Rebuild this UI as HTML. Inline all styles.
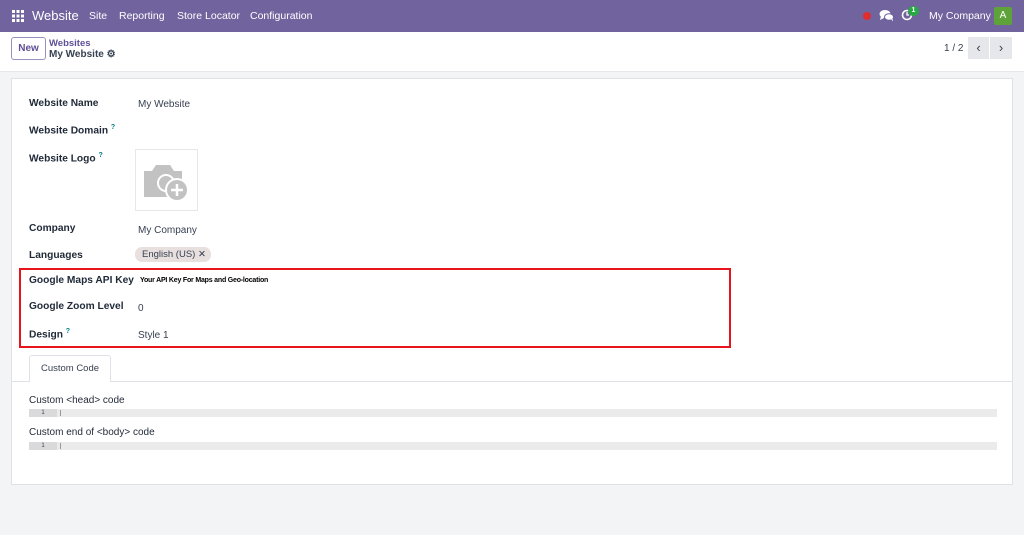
<!DOCTYPE html>
<html><head><style>
*{box-sizing:border-box;margin:0;padding:0}
body{width:1024px;height:535px;background:#f3f4f6;font-family:"Liberation Sans",sans-serif;font-size:10px;color:#374151;position:relative;overflow:hidden}
.nav{position:absolute;left:0;top:0;width:1024px;height:32px;background:#71639e;color:#fff}
.nav span{position:absolute;top:10px;font-size:10.5px}
.cp{position:absolute;left:0;top:32px;width:1024px;height:40px;background:#fff;border-bottom:1px solid #e5e7eb}
.sheet{position:absolute;left:11px;top:78px;width:1002px;height:407px;background:#fff;border:1px solid #dee2e6}
.a{position:absolute}
.lbl{position:absolute;left:17px;font-weight:bold;color:#1f2937;font-size:10.2px}
.val{position:absolute;left:126px;font-size:10px;color:#374151}
sup{color:#017e84;font-size:7px}
.code{position:absolute;left:17px;width:968px;height:8px;background:#ebebeb}
.code b{position:absolute;left:0;top:0;width:28px;height:8px;background:#dadada;font-size:6px;text-align:center;line-height:8px;font-weight:normal}
.code i{position:absolute;left:31px;top:1px;width:1px;height:6px;background:#999}
</style></head><body>
<div class="nav">
<svg class="a" style="left:12px;top:10px" width="12" height="12"><g fill="#fff"><rect x="0" y="0" width="3" height="3"/><rect x="4.5" y="0" width="3" height="3"/><rect x="9" y="0" width="3" height="3"/><rect x="0" y="4.5" width="3" height="3"/><rect x="4.5" y="4.5" width="3" height="3"/><rect x="9" y="4.5" width="3" height="3"/><rect x="0" y="9" width="3" height="3"/><rect x="4.5" y="9" width="3" height="3"/><rect x="9" y="9" width="3" height="3"/></g></svg>
<span style="left:32px;top:8px;font-size:13px">Website</span>
<span style="left:89px">Site</span>
<span style="left:119px">Reporting</span>
<span style="left:177px">Store Locator</span>
<span style="left:250px">Configuration</span>
<div class="a" style="left:863px;top:12px;width:8px;height:8px;border-radius:50%;background:#e02d2d"></div>
<svg class="a" style="left:879px;top:9px" width="15" height="13"><ellipse cx="6" cy="5" rx="5.5" ry="4" fill="#fff"/><path d="M2 7l-1 4 4-2z" fill="#fff"/><ellipse cx="10" cy="8" rx="4.5" ry="3.3" fill="#fff" stroke="#71639e" stroke-width="1"/><path d="M12 10l2 2.5-0.5-3z" fill="#fff"/></svg>
<svg class="a" style="left:901px;top:9px" width="12" height="12"><circle cx="6" cy="6" r="4.5" fill="none" stroke="#fff" stroke-width="1.6"/><path d="M6 3v3h2" stroke="#fff" fill="none" stroke-width="1.3"/></svg>
<div class="a" style="left:908px;top:6px;width:11px;height:10px;border-radius:5px;background:#28a745;font-size:7px;text-align:center;line-height:10px;font-weight:bold">1</div>
<span style="left:929px">My Company</span>
<div class="a" style="left:994px;top:7px;width:18px;height:18px;background:#5ea23a;border-radius:2px;text-align:center;line-height:18px;font-size:10px">A</div>
</div>
<div class="cp">
<div class="a" style="left:11px;top:5px;width:35px;height:23px;border:1px solid #9a8fbf;border-radius:3px;color:#5f4f96;font-weight:bold;text-align:center;line-height:21px;font-size:10px">New</div>
<div class="a" style="left:49px;top:6px;color:#5f4f96;font-weight:bold;font-size:9.5px">Websites</div>
<div class="a" style="left:49px;top:17px;color:#374151;font-weight:bold;font-size:10px">My Website <span style="font-size:10px">⚙</span></div>
<div class="a" style="left:944px;top:11px;font-size:10px">1 / 2</div>
<div class="a" style="left:968px;top:5px;width:21px;height:22px;background:#e5e7eb;text-align:center;line-height:22px;font-size:13px">‹</div>
<div class="a" style="left:990px;top:5px;width:22px;height:22px;background:#e5e7eb;text-align:center;line-height:22px;font-size:13px">›</div>
</div>
<div class="sheet">
<div class="lbl" style="top:19px">Website Name</div><div class="val" style="top:20px">My Website</div>
<div class="lbl" style="top:45px">Website Domain <sup>?</sup></div>
<div class="lbl" style="top:73px">Website Logo <sup>?</sup></div>
<div class="a" style="left:123px;top:70px;width:63px;height:62px;border:1px solid #e5e7eb"></div>
<svg class="a" style="left:130px;top:82px" width="48" height="42"><path d="M2 10h8l4-6h14l4 6h8v26H2z" fill="#c2c2c2"/><circle cx="24" cy="22" r="9" fill="#fff"/><circle cx="24" cy="22" r="7" fill="#c2c2c2"/><circle cx="35" cy="29" r="12" fill="#fff"/><circle cx="35" cy="29" r="10" fill="#c2c2c2"/><path d="M35 23v12M29 29h12" stroke="#fff" stroke-width="2.5"/></svg>
<div class="lbl" style="top:144px">Company</div><div class="val" style="top:146px">My Company</div>
<div class="lbl" style="top:171px">Languages</div>
<div class="a" style="left:123px;top:168px;width:76px;height:15px;border-radius:7px;background:#e8dfdf;font-size:9.5px;line-height:15px;padding-left:7px">English (US) ✕</div>
<div class="a" style="left:7px;top:189px;width:712px;height:80px;border:2px solid #e8141b"></div>
<div class="lbl" style="top:196px">Google Maps API Key</div>
<div class="a" style="left:128px;top:198px;font-size:7px;font-weight:bold;color:#000;letter-spacing:-0.2px">Your API Key For Maps and Geo-location</div>
<div class="lbl" style="top:222px">Google Zoom Level</div><div class="val" style="top:224px">0</div>
<div class="lbl" style="top:249px">Design <sup>?</sup></div><div class="val" style="top:251px">Style 1</div>
<div class="a" style="left:17px;top:276px;width:82px;height:27px;border:1px solid #dee2e6;border-bottom:none;background:#fff;border-radius:3px 3px 0 0;text-align:center;line-height:26px;font-size:9.5px;z-index:2">Custom Code</div>
<div class="a" style="left:0;top:302px;width:1000px;height:1px;background:#dee2e6"></div>
<div class="a" style="left:17px;top:316px;font-size:10px;color:#1f2937">Custom &lt;head&gt; code</div>
<div class="code" style="top:330px"><b>1</b><i></i></div>
<div class="a" style="left:17px;top:348px;font-size:10px;color:#1f2937">Custom end of &lt;body&gt; code</div>
<div class="code" style="top:363px"><b>1</b><i></i></div>
</div>
</body></html>
